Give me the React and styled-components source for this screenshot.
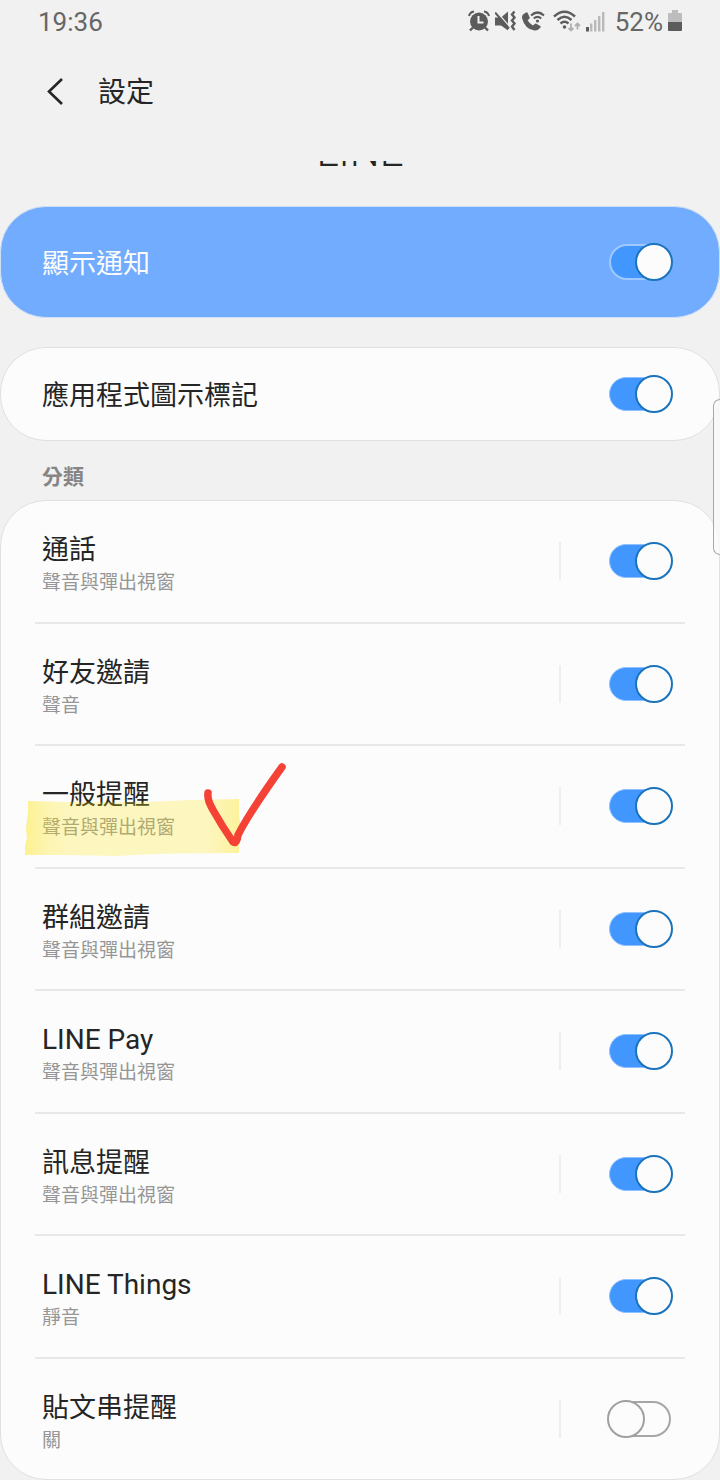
import React, { useState } from 'react'
import styled, { createGlobalStyle } from 'styled-components'

const categories = [
  { id: 'calls', name: '通話', detail: '聲音與彈出視窗', on: true },
  { id: 'friends', name: '好友邀請', detail: '聲音', on: true },
  { id: 'general', name: '一般提醒', detail: '聲音與彈出視窗', on: true, marked: true },
  { id: 'groups', name: '群組邀請', detail: '聲音與彈出視窗', on: true },
  { id: 'pay', name: 'LINE Pay', detail: '聲音與彈出視窗', on: true, latin: true },
  { id: 'messages', name: '訊息提醒', detail: '聲音與彈出視窗', on: true },
  { id: 'things', name: 'LINE Things', detail: '靜音', on: true, latin: true },
  { id: 'timeline', name: '貼文串提醒', detail: '關', on: false },
]

const StatusIcons = () => {
  return (
    <Icons>
      <svg width='22' height='24' viewBox='0 0 22 24' fill='none' stroke='#5c5c5c'>
        <circle cx='11' cy='11.500' r='9' fill='#5c5c5c' stroke='none' />
        <path d='M1 6Q2 2 6 1.500M21 6Q20 2 16 1.500' strokeWidth='2' />
        <path d='M5 17.500l-3 3M17 17.500l3 3' strokeWidth='2.400' />
        <path d='M10.500 6v6.500h5' stroke='#f1f1f1' strokeWidth='2' />
      </svg>
      <svg width='22' height='24' viewBox='0 0 22 24' fill='none' stroke='#5c5c5c'>
        <path d='M0 7.500h6L13 1.500v19L6 15.500H0z' fill='#5c5c5c' stroke='none' />
        <path d='M1.500 1.500l13 15' stroke='#f1f1f1' strokeWidth='1.200' />
        <path d='M0 2.500l14 16' strokeWidth='2' />
        <path d='M19.500 1.500l-2.500 3 2.500 3-2.500 3 2.500 3-2.500 3 2.500 3.500' strokeWidth='2.400' />
      </svg>
      <svg width='24' height='24' viewBox='0 0 24 24' fill='none' stroke='#5c5c5c'>
        <path
          d='M1 4.500L4 2.500q1.200-.5 1.800.8l1.800 4q.4 1-.5 1.700l-1.500 1.300q1.800 3.500 5.400 5.300l1.700-1.700q.8-.7 1.700-.2l3.800 2.200q1 .7.3 1.700-2.200 3.200-6 2.900Q3 19.500 0 8q-.1-2.300 1-3.500z'
          fill='#5c5c5c'
          stroke='none'
        />
        <path d='M9 5.500q6.500-6 13 0M11.800 8.500q3.700-3.200 7.400 0' strokeWidth='2.200' />
        <circle cx='15.500' cy='11' r='1.600' fill='#5c5c5c' stroke='none' />
      </svg>
      <Wifi width='28' height='24' viewBox='0 0 28 24' fill='none' stroke='#5c5c5c'>
        <path d='M1 6.500Q11.500 -3 22 6.500M4.500 10Q11.500 3.500 18.500 10M7.500 13.500Q11.500 10 15.500 13.500' strokeWidth='2.400' />
        <circle cx='11.500' cy='17' r='1.800' fill='#5c5c5c' stroke='none' />
        <path d='M18 13.500v7M15.500 18l2.500 2.500 2.500-2.500M24.500 19.500v-6M22 16l2.500-2.500L27 16' stroke='#b0b0b0' strokeWidth='1.800' />
      </Wifi>
      <svg width='20' height='24' viewBox='0 0 20 24'>
        <rect x='0' y='17' width='3' height='4.500' fill='#5c5c5c' />
        <path d='M4 13.500h2.400v8H4zM8 10h2.400v11.500H8zM12 6h2.400v15.500H12zM16 2h2.400v19.500H16z' fill='#b9b9b9' />
      </svg>
      <StatusText>52%</StatusText>
      <svg width='14' height='24' viewBox='0 0 14 24'>
        <path d='M4 0h6v3h3q1 0 1 1v8H0V4q0-1 1-1h3z' fill='#bdbdbd' />
        <path d='M0 12h14v8q0 1-1 1H1q-1 0-1-1z' fill='#5c5c5c' />
      </svg>
    </Icons>
  )
}

const MarkerDrawing = () => {
  return (
    <Marker viewBox='20 760 270 100' fill='none' aria-hidden='true'>
      <defs>
        <linearGradient id='tape'>
          <stop offset='0' stopColor='#fee408' stopOpacity='0.450' />
          <stop offset='0.090' stopColor='#fee408' stopOpacity='0.320' />
          <stop offset='0.200' stopColor='#fee408' stopOpacity='0.250' />
          <stop offset='0.850' stopColor='#fee408' stopOpacity='0.250' />
          <stop offset='1' stopColor='#fee408' stopOpacity='0.400' />
        </linearGradient>
      </defs>
      <path
        d='M28 801Q120 804 190 800L239 799 239 817 240 820 239 853Q150 853 120 856L60 855 25 855 25 846 27 838 26 830 27 820 28 812z'
        fill='url(#tape)'
      />
      <path
        d='M208 793Q207 800 213 810Q222 826 233 842Q237 844 238 835Q249 813 282 767'
        stroke='#f44336'
        strokeWidth='7.500'
        strokeLinecap='round'
        strokeLinejoin='round'
      />
    </Marker>
  )
}

const App = () => {
  const [enabled, setEnabled] = useState(() => {
    const initial = { all: true, badge: true }
    categories.forEach((item) => {
      initial[item.id] = item.on
    })
    return initial
  })

  const toggle = (e) => {
    const { id, checked } = e.target
    setEnabled((prev) => ({ ...prev, [id]: checked }))
  }

  return (
    <Page>
      <GlobalStyle />
      <StatusBar>
        <StatusText>19:36</StatusText>
        <StatusIcons />
      </StatusBar>
      <Header>
        <BackButton type='button' aria-label='返回'>
          <svg width='20' height='30' viewBox='0 0 20 30' fill='none'>
            <path d='M18 2L5 14.500l13 12.500' stroke='#252525' strokeWidth='2.600' />
          </svg>
        </BackButton>
        <h1>設定</h1>
      </Header>
      <AppName>LINE</AppName>
      <MainCard>
        <Name htmlFor='all'>顯示通知</Name>
        <Switch id='all' $outlined checked={enabled.all} onChange={toggle} />
      </MainCard>
      <SingleCard>
        <Name htmlFor='badge'>應用程式圖示標記</Name>
        <Switch id='badge' checked={enabled.badge} onChange={toggle} />
      </SingleCard>
      <SectionTitle>分類</SectionTitle>
      <CategoryList>
        {categories.map((item) => {
          const { id, name, detail, marked, latin } = item
          return (
            <CategoryRow key={id}>
              <CategoryText>
                <Name htmlFor={id} $latin={latin}>
                  {name}
                </Name>
                <Detail>{detail}</Detail>
              </CategoryText>
              <Separator />
              <Switch id={id} checked={enabled[id]} onChange={toggle} />
              {marked && <MarkerDrawing />}
            </CategoryRow>
          )
        })}
      </CategoryList>
      <EdgeHandle />
    </Page>
  )
}

const GlobalStyle = createGlobalStyle`
  * {
    box-sizing: border-box;
    margin: 0;
    padding: 0;
  }
  body {
    background: #f1f1f1;
    color: #252525;
    font-family: Roboto, 'Noto Sans CJK TC', sans-serif;
  }
`

const Page = styled.main`
  position: relative;
  display: flex;
  flex-direction: column;
  min-height: 100vh;
  overflow: hidden;
`

const StatusBar = styled.div`
  display: flex;
  align-items: center;
  justify-content: space-between;
  height: 44px;
  padding: 0 38px;
`

const StatusText = styled.span`
  color: #666;
  font-size: 26px;
  line-height: 44px;
`

const Icons = styled.div`
  display: flex;
  align-items: center;
  gap: 5px;
  svg {
    flex: none;
  }
  ${StatusText} {
    margin-left: 4px;
  }
`

const Wifi = styled.svg`
  margin-left: 2px;
`

const Header = styled.header`
  display: flex;
  align-items: center;
  height: 96px;
  padding: 0 36px;
  gap: 34px;
  h1 {
    padding-top: 2px;
    font-size: 28px;
    font-weight: 400;
    line-height: 36px;
  }
`

const BackButton = styled.button`
  display: flex;
  justify-content: flex-end;
  width: 28px;
  border: none;
  background: none;
  cursor: pointer;
`

/* only the lower edge of the title is left while the header is collapsed */
const AppName = styled.div`
  display: flex;
  align-items: flex-end;
  justify-content: center;
  height: 12px;
  margin: 21px 0 33px;
  overflow: hidden;
  font-size: 42px;
  font-weight: 300;
  line-height: 42px;
`

const Name = styled.label`
  display: block;
  font-size: ${(props) => (props.$latin ? '28px' : '27px')};
  line-height: 36px;
`

const Card = styled.section`
  display: flex;
  align-items: center;
  justify-content: space-between;
  padding: 0 46px 0 41px;
  border: 1px solid #e0e0e0;
  border-radius: 46px;
  background: #fcfcfc;
  ${Name} {
    padding-top: 4px;
  }
`

const MainCard = styled(Card)`
  height: 112px;
  margin-bottom: 29px;
  border-color: #cfe0f5;
  background: #71acff;
  color: #fcfcfc;
`

const SingleCard = styled(Card)`
  height: 94px;
`

const SectionTitle = styled.h2`
  padding: 21px 42px 7px;
  color: #858585;
  font-size: 21px;
  font-weight: 700;
  line-height: 31px;
`

const CategoryList = styled.ul`
  display: flex;
  flex: 1;
  flex-direction: column;
  padding: 0 34px;
  border: 1px solid #e0e0e0;
  border-radius: 46px;
  background: #fcfcfc;
  list-style: none;
`

const CategoryRow = styled.li`
  position: relative;
  display: flex;
  flex: 1 0 auto;
  align-items: center;
  padding: 20px 12px 20px 7px;
  border-bottom: 2px solid #e8e8e8;
  &:last-child {
    border-bottom: none;
  }
`

const CategoryText = styled.div`
  flex: 1;
  padding-top: 8px;
`

const Detail = styled.p`
  color: #969696;
  font-size: 19px;
  line-height: 30px;
`

const Separator = styled.span`
  width: 2px;
  height: 38px;
  margin-right: 46px;
  background: #eee;
`

const Switch = styled.input.attrs({ type: 'checkbox', role: 'switch' })`
  display: grid;
  flex: none;
  align-items: center;
  width: 66px;
  height: 38px;
  appearance: none;
  cursor: pointer;
  &::before,
  &::after {
    grid-area: 1 / 1;
    box-sizing: border-box;
    content: '';
  }
  &::before {
    height: 36px;
    margin: 0 2px;
    border: 2px solid #a6a6a6;
    border-radius: 18px;
    background: #fcfcfc;
  }
  &::after {
    width: 38px;
    height: 38px;
    border: 2px solid #a0a0a0;
    border-radius: 50%;
    background: #fcfcfc;
  }
  &:checked::before {
    height: ${(props) => (props.$outlined ? '36px' : '34px')};
    border: ${(props) => (props.$outlined ? '2px solid #9fc9ff' : '1px solid #8fc1ff')};
    background: #4297ff;
  }
  &:checked::after {
    justify-self: end;
    border-color: #1a73bd;
  }
`

const Marker = styled.svg`
  position: absolute;
  top: 14px;
  left: -15px;
  width: 270px;
  height: 100px;
  pointer-events: none;
`

const EdgeHandle = styled.div`
  position: absolute;
  top: 399px;
  right: 0;
  width: 7px;
  height: 156px;
  border: 1px solid #a8a8a8;
  border-right: none;
  border-radius: 7px 0 0 7px;
  background: rgba(250, 250, 250, 0.8);
`

export default App
